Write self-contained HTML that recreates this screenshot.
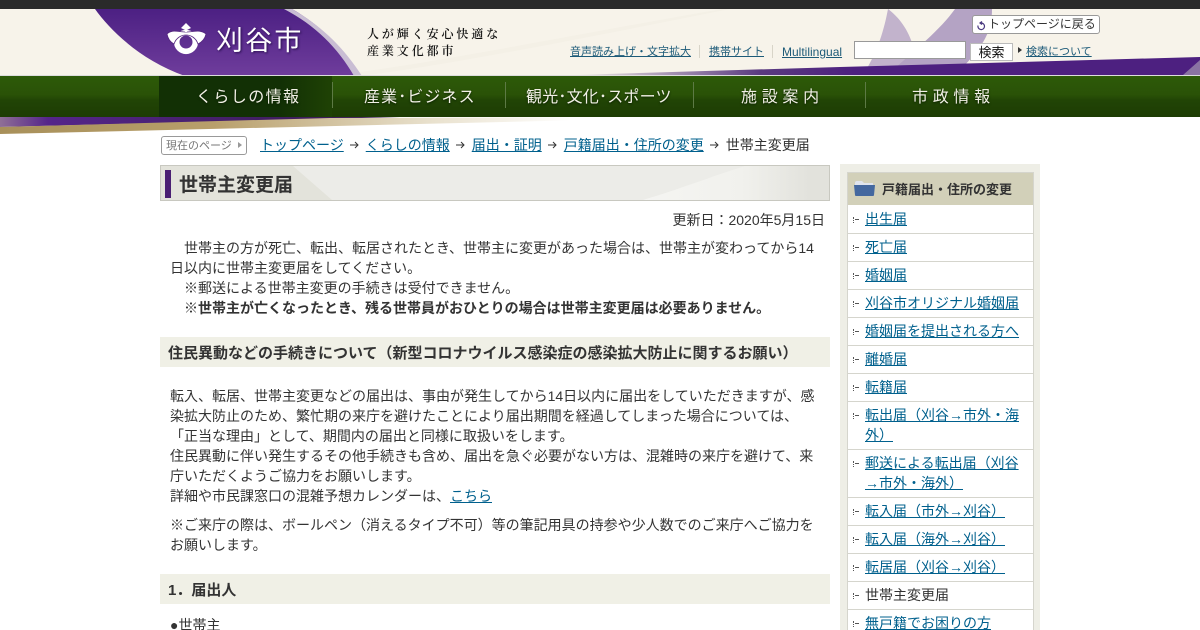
<!DOCTYPE html>
<html lang="ja"><head><meta charset="utf-8"><title>世帯主変更届</title>
<style>
*{margin:0;padding:0;box-sizing:border-box}
html,body{width:1200px;height:630px;overflow:hidden;background:#fff}
body{position:relative;font-family:"Liberation Sans","Noto Sans CJK JP",sans-serif;font-size:14px;line-height:20px;color:#333}
a{color:#00608d;text-decoration:underline}
.a{position:absolute;white-space:nowrap}
.nav{position:absolute;top:76px;height:41px;line-height:43px;color:#f2f0e6;font-size:16px;white-space:nowrap;text-shadow:0 1px 2px #0a2000}
.sep{position:absolute;top:82px;height:26px;width:1px;background:#5d7a45}
.h2{position:absolute;left:160px;width:670px;background:#f0f0e6;font-weight:bold;font-size:15px;padding-left:8px;color:#333}
.p{position:absolute;left:170px;width:650px}
.side{position:absolute;left:848px;width:185px;border-bottom:1px solid #d5d5cd;background:#fff;padding:3px 8px 3px 17px;line-height:20px;font-size:14px}
.side:before{content:"";position:absolute;left:5px;top:11px;width:6px;height:6px;border-left:1px dotted #555;background:linear-gradient(#555,#555) 1px 2px/4px 1px no-repeat}
.top{font-size:11px;position:absolute;top:44px;white-space:nowrap;line-height:16px;color:#1c5a78}
.arr{display:inline-block;width:22px;text-align:center}
.arr svg{vertical-align:1px}
</style></head><body>
<svg class="a" style="left:0;top:0" width="1200" height="134" viewBox="0 0 1200 134">
<defs>
<linearGradient id="pg" x1="0" y1="0" x2="0" y2="1"><stop offset="0" stop-color="#4c2083"/><stop offset="1" stop-color="#6f3d9c"/></linearGradient>
<linearGradient id="nv" x1="0" y1="0" x2="0" y2="1"><stop offset="0" stop-color="#2d5a09"/><stop offset=".45" stop-color="#2a5207"/><stop offset=".6" stop-color="#214405"/><stop offset="1" stop-color="#1d3c04"/></linearGradient>
<linearGradient id="gold" x1="0" y1="0" x2="1" y2="0"><stop offset="0" stop-color="#a8905a"/><stop offset=".3" stop-color="#b89f6b"/><stop offset=".6" stop-color="#e8e0cc"/><stop offset=".8" stop-color="#fff"/></linearGradient>
<linearGradient id="pb" x1="0" y1="0" x2="1" y2="0"><stop offset="0" stop-color="#8f6f96"/><stop offset=".12" stop-color="#55258a"/><stop offset=".8" stop-color="#3d1d5a"/></linearGradient>
<linearGradient id="pr" x1="0" y1="0" x2="1" y2="0"><stop offset="0" stop-color="#f7f3ea"/><stop offset=".3" stop-color="#5a3a80"/><stop offset=".45" stop-color="#4d2080"/><stop offset="1" stop-color="#4d2080"/></linearGradient>
<linearGradient id="nc" x1="0" y1="0" x2="1" y2="0"><stop offset="0" stop-color="#123005"/><stop offset=".7" stop-color="#123005"/><stop offset="1" stop-color="#1f4205"/></linearGradient>
</defs>
<rect width="1200" height="76" fill="#f7f3ea"/>
<rect width="1200" height="9" fill="#2a2a2a"/>
<path d="M888 9 C900 18 910 32 914 50 L916 70 L866 70 C878 50 884 30 888 9Z" fill="#c2b3cc"/>
<path d="M893 70 C915 50 940 30 955 9 L992 9 C992 30 985 45 960 70Z" fill="#b4a3c4"/>
<path d="M360 76 C450 65 600 35 730 9 L722 9 C600 30 450 60 360 72Z" fill="#f4f0e6"/>
<path d="M95 9 C110 30 140 60 185 76 L358 76 C340 45 320 25 292 9Z" fill="url(#pg)"/>
<path d="M292 9 C325 28 345 50 362 76 L354 76 C338 48 315 25 284 9Z" fill="#c9bdd4"/>
<path d="M572 75 L840 67 L1200 57 L1200 75Z" fill="url(#pr)"/>
<path d="M1183 75 L1200 60 L1200 75Z" fill="#8a73a3"/>
<rect y="75" width="1200" height="1" fill="#ddd"/>
<rect y="76" width="1200" height="41" fill="url(#nv)"/>
<rect x="159" y="76" width="173" height="41" fill="url(#nc)"/>
<path d="M0 117 L400 117 L0 127Z" fill="url(#pb)"/>
<path d="M0 127 L330 118 L714 117 L0 134Z" fill="url(#gold)"/>
<!-- logo -->
<circle cx="186" cy="42" r="9.3" fill="none" stroke="#fff" stroke-width="5.6"/>
<path d="M167 34 C172 29 178 32 186 32 C194 32 200 29 206 34 C205 39 202 42 198 44 C196 38 191 35 186 35 C181 35 176 38 174 44 C170 42 168 39 167 34Z" fill="#fff" stroke="#54267f" stroke-width=".8"/>
<path d="M186 23 L191 28 L187 30 V32 H185 V30 L181 28Z" fill="#fff"/>
</svg>
<div class="a" style="left:216px;top:21px;font-size:27px;line-height:36px;color:#fff;letter-spacing:2.2px;font-family:'Noto Sans CJK JP',sans-serif;text-shadow:1px 1px 2px #2a0f50">刈谷市</div>
<div class="a" style="left:367px;top:25px;font-size:12px;line-height:17px;letter-spacing:2.9px;color:#111;font-family:'Noto Serif CJK SC',serif;font-weight:600">人が輝く安心快適な<br>産業文化都市</div>
<a class="top" style="left:570px">音声読み上げ・文字拡大</a>
<a class="top" style="left:709px">携帯サイト</a>
<a class="top" style="left:782px;font-size:12px">Multilingual</a>
<div class="a" style="left:699px;top:45px;width:1px;height:13px;background:#d8d4c8"></div>
<div class="a" style="left:772px;top:45px;width:1px;height:13px;background:#d8d4c8"></div>
<div class="a" style="left:854px;top:41px;width:112px;height:18px;background:#fff;border:1px solid #999"></div>
<div class="a" style="left:970px;top:43px;width:43px;height:18px;background:#fff;border:1px solid #bbb;text-align:center;font-size:13px;line-height:17px;color:#111">検索</div>
<div class="a" style="left:1018px;top:47px;border-left:4px solid #333;border-top:3.5px solid transparent;border-bottom:3.5px solid transparent"></div>
<a class="top" style="left:1026px">検索について</a>
<div class="a" style="left:972px;top:15px;width:128px;height:19px;background:#fff;border:1px solid #999;border-radius:3px;font-size:12px;line-height:16px;color:#333;padding-left:15px">トップページに戻る</div>
<svg class="a" style="left:976px;top:20px" width="11" height="11" viewBox="0 0 11 11"><path d="M6 1.5 L4 3 L6 4.5 M5 3 A3.3 3.3 0 1 1 2 5.5" fill="none" stroke="#4a3a80" stroke-width="1.2"/></svg>

<div class="nav" style="left:196px;letter-spacing:1.4px">くらしの情報</div>
<div class="sep" style="left:332px"></div>
<div class="nav" style="left:364px;letter-spacing:1.1px">産業･ビジネス</div>
<div class="sep" style="left:505px"></div>
<div class="nav" style="left:526px;letter-spacing:.2px">観光･文化･スポーツ</div>
<div class="sep" style="left:693px"></div>
<div class="nav" style="left:741px;letter-spacing:4.7px">施設案内</div>
<div class="sep" style="left:865px"></div>
<div class="nav" style="left:912px;letter-spacing:4.7px">市政情報</div>

<div class="a" style="left:161px;top:136px;width:86px;height:19px;border:1px solid #999;border-radius:3px;font-size:11px;line-height:18px;color:#777;padding-left:4px">現在のページ</div>
<div class="a" style="left:238px;top:142px;border-left:4px solid #999;border-top:3px solid transparent;border-bottom:3px solid transparent"></div>
<div class="a" style="left:260px;top:135px"><a href="#">トップページ</a><span class="arr"><svg width="9" height="8" viewBox="0 0 9 8"><path d="M0 4H8M5 1L8 4L5 7" fill="none" stroke="#333"/></svg></span><a href="#">くらしの情報</a><span class="arr"><svg width="9" height="8" viewBox="0 0 9 8"><path d="M0 4H8M5 1L8 4L5 7" fill="none" stroke="#333"/></svg></span><a href="#">届出・証明</a><span class="arr"><svg width="9" height="8" viewBox="0 0 9 8"><path d="M0 4H8M5 1L8 4L5 7" fill="none" stroke="#333"/></svg></span><a href="#">戸籍届出・住所の変更</a><span class="arr"><svg width="9" height="8" viewBox="0 0 9 8"><path d="M0 4H8M5 1L8 4L5 7" fill="none" stroke="#333"/></svg></span>世帯主変更届</div>

<svg class="a" style="left:160px;top:165px" width="670" height="36" viewBox="0 0 670 36">
<defs><linearGradient id="tg" gradientUnits="userSpaceOnUse" x1="480" y1="0" x2="650" y2="0"><stop offset="0" stop-color="#f5f5f2"/><stop offset=".6" stop-color="#f1f1ed"/><stop offset="1" stop-color="#e2e2dc"/></linearGradient></defs>
<rect x=".5" y=".5" width="669" height="35" fill="#ecece8" stroke="#c8c8c0"/>
<path d="M1 1 H133 L172 35 H1Z" fill="#e3e3db"/>
<path d="M483 35 C520 24 550 12 585 1 H669 V35Z" fill="url(#tg)"/>
<rect x="5" y="5" width="6" height="28" fill="#4a1f73"/>
</svg>
<div class="a" style="left:179px;top:174px;font-size:19px;line-height:24px;font-weight:bold;color:#333">世帯主変更届</div>
<div class="a" style="right:375px;top:210px">更新日：2020年5月15日</div>

<div class="p" style="top:238px"><span style="margin-left:14px"></span>世帯主の方が死亡、転出、転居されたとき、世帯主に変更があった場合は、世帯主が変わってから14<br>日以内に世帯主変更届をしてください。<br><span style="margin-left:14px"></span>※郵送による世帯主変更の手続きは受付できません。<br><span style="margin-left:14px"></span><b>※世帯主が亡くなったとき、残る世帯員がおひとりの場合は世帯主変更届は必要ありません。</b></div>

<div class="h2" style="top:337px;height:30px;line-height:33px">住民異動などの手続きについて（新型コロナウイルス感染症の感染拡大防止に関するお願い）</div>
<div class="p" style="top:386px">転入、転居、世帯主変更などの届出は、事由が発生してから14日以内に届出をしていただきますが、感<br>染拡大防止のため、繁忙期の来庁を避けたことにより届出期間を経過してしまった場合については、<br>「正当な理由」として、期間内の届出と同様に取扱いをします。<br>住民異動に伴い発生するその他手続きも含め、届出を急ぐ必要がない方は、混雑時の来庁を避けて、来<br>庁いただくようご協力をお願いします。<br>詳細や市民課窓口の混雑予想カレンダーは、<a href="#">こちら</a></div>
<div class="p" style="top:515px">※ご来庁の際は、ボールペン（消えるタイプ不可）等の筆記用具の持参や少人数でのご来庁へご協力を<br>お願いします。</div>
<div class="h2" style="top:574px;height:30px;line-height:33px">1．届出人</div>
<div class="p" style="top:615px">●世帯主</div>

<div class="a" style="left:840px;top:164px;width:200px;height:466px;background:#eeeee6"></div>
<div class="a" style="left:847px;top:172px;width:187px;height:458px;background:#fff;border:1px solid #d5d5cd"></div>
<div class="a" style="left:848px;top:173px;width:185px;height:32px;background:#d2d0b9;font-weight:bold;font-size:13px;line-height:33px;padding-left:34px;color:#333">戸籍届出・住所の変更</div>
<svg class="a" style="left:854px;top:180px" width="22" height="16" viewBox="0 0 22 16"><path d="M1 3 Q1 1 3 1 H8 L10 3 H19 V6 H1Z" fill="#dfe4ee"/><path d="M0 5 H21 L20 15 Q20 16 19 16 H2 Q1 16 1 15Z" fill="#44689f"/></svg>
<div class="side" style="top:206px;height:28px"><a href="#">出生届</a></div>
<div class="side" style="top:234px;height:28px"><a href="#">死亡届</a></div>
<div class="side" style="top:262px;height:28px"><a href="#">婚姻届</a></div>
<div class="side" style="top:290px;height:28px"><a href="#">刈谷市オリジナル婚姻届</a></div>
<div class="side" style="top:318px;height:28px"><a href="#">婚姻届を提出される方へ</a></div>
<div class="side" style="top:346px;height:28px"><a href="#">離婚届</a></div>
<div class="side" style="top:374px;height:28px"><a href="#">転籍届</a></div>
<div class="side" style="top:402px;height:48px"><a href="#">転出届（刈谷→市外・海外）</a></div>
<div class="side" style="top:450px;height:48px"><a href="#">郵送による転出届（刈谷→市外・海外）</a></div>
<div class="side" style="top:498px;height:28px"><a href="#">転入届（市外→刈谷）</a></div>
<div class="side" style="top:526px;height:28px"><a href="#">転入届（海外→刈谷）</a></div>
<div class="side" style="top:554px;height:28px"><a href="#">転居届（刈谷→刈谷）</a></div>
<div class="side" style="top:582px;height:28px">世帯主変更届</div>
<div class="side" style="top:610px;height:28px"><a href="#">無戸籍でお困りの方</a></div>
</body></html>
